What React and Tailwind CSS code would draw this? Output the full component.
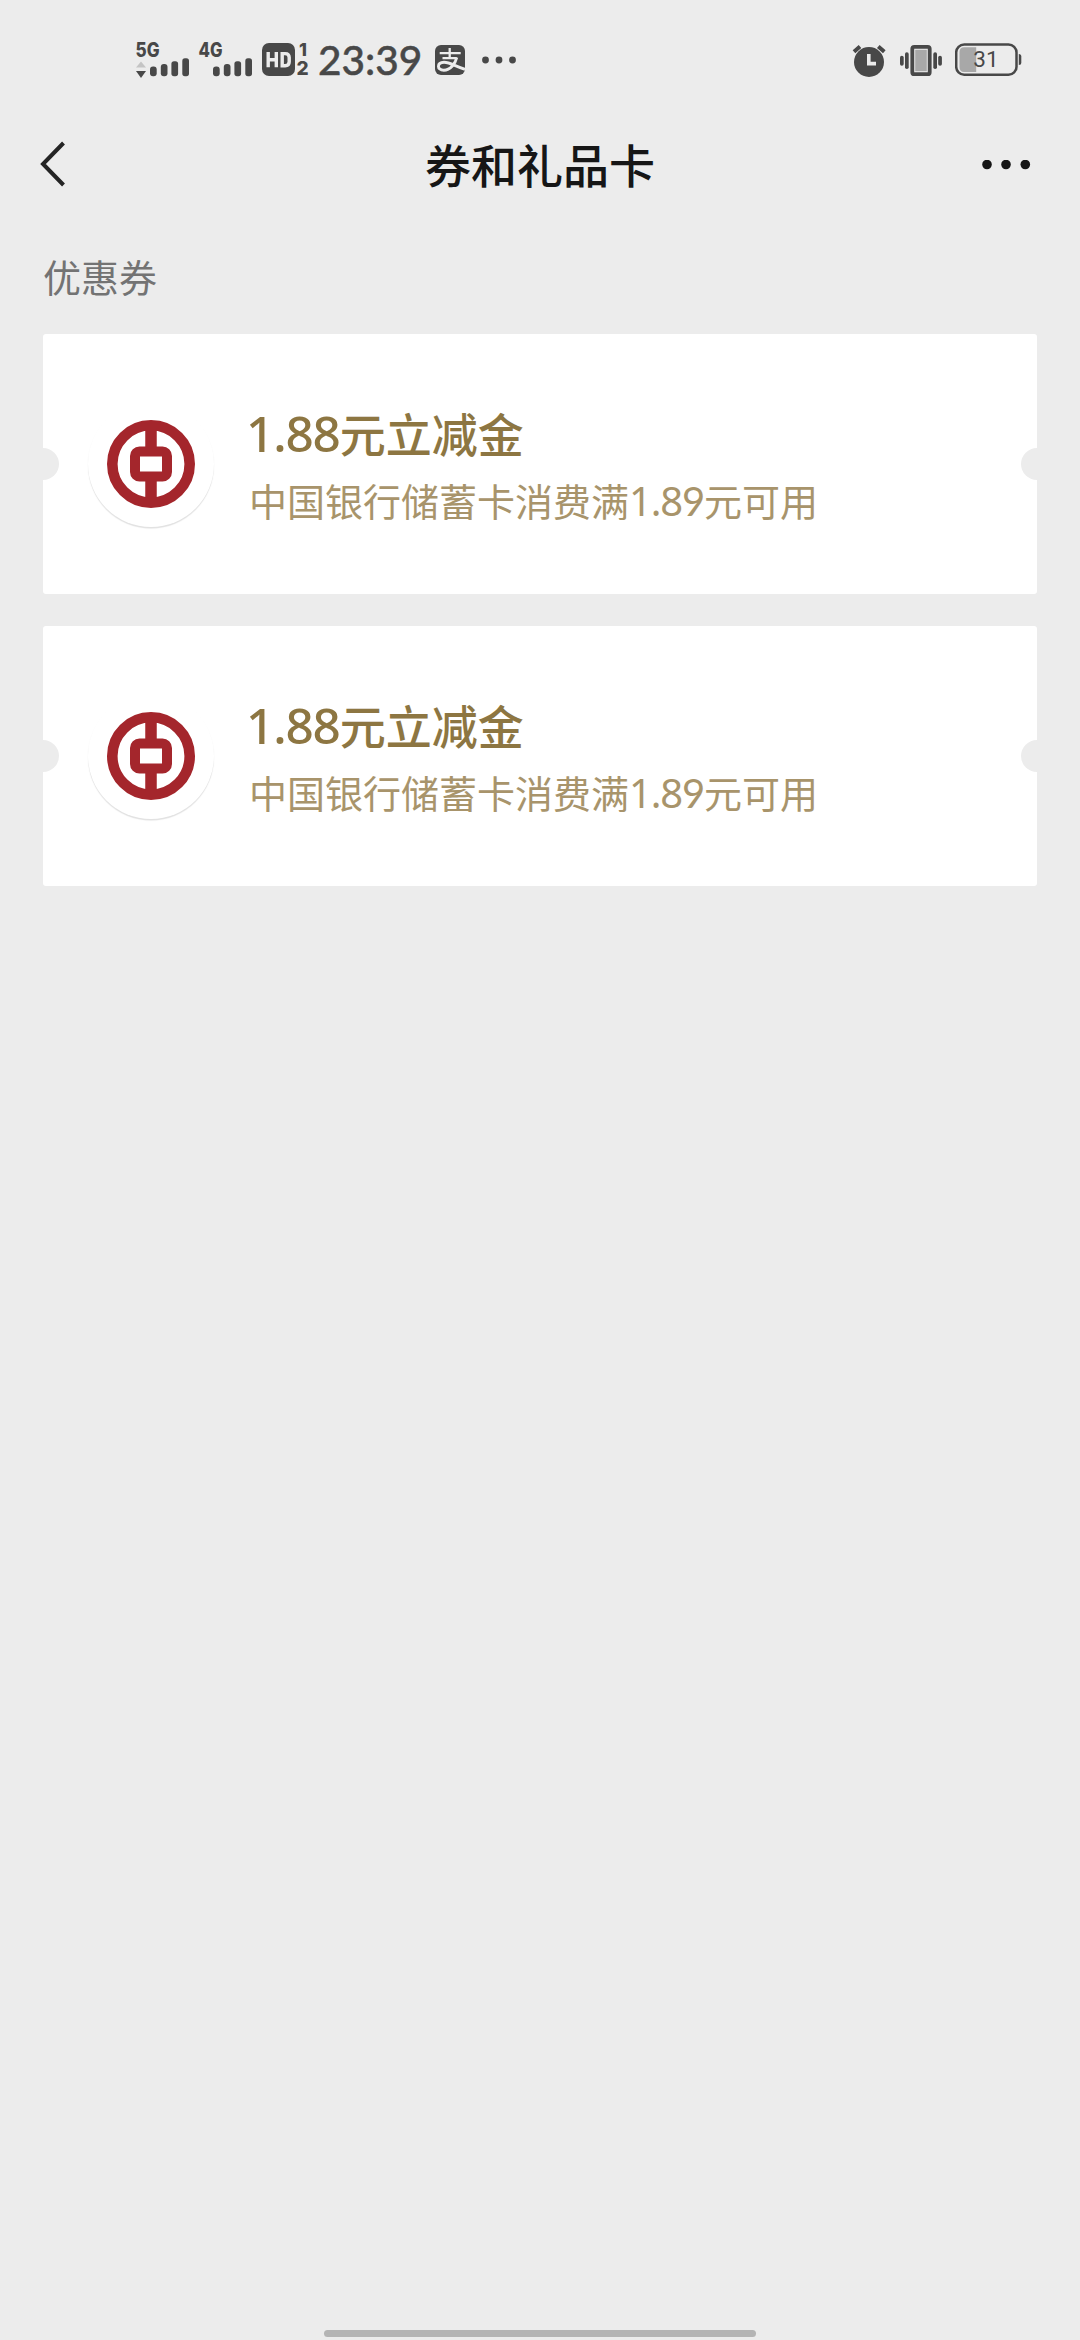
const coupons = [
  { id: 1, amount: '1.88', unit: '元立减金', prefix: '中国银行储蓄卡消费满', limit: '1.89', suffix: '元可用' },
  { id: 2, amount: '1.88', unit: '元立减金', prefix: '中国银行储蓄卡消费满', limit: '1.89', suffix: '元可用' },
]

// 9 has a straight tail in Lato, the other digits stay in Noto Sans
function Digits({ value, className }) {
  return (
    <span className={`font-['Noto_Sans'] ${className}`}>
      {value.split('').map((c, i) => (
        <span key={i} className={c === '9' ? "font-['Lato']" : ''}>{c}</span>
      ))}
    </span>
  )
}

function Signal({ label, arrows, bars }) {
  return (
    <svg className="-mt-2" width="58" height="48" viewBox="0 -8 58 48" fill="#484848">
      <text x="0.5" y="16.5" fontSize="19.5" fontWeight="800" fontFamily="Inter" textLength="24" lengthAdjust="spacingAndGlyphs">{label}</text>
      {arrows && (
        <>
          <path d="M6 21.5l5 6h-10z" fill="#c4c4c4" />
          <path d="M1 31h10l-5 7z" />
        </>
      )}
      <rect x={bars} y="26.5" width="6.7" height="9.7" rx="3" />
      <rect x={bars + 10.8} y="24" width="6.7" height="12.2" rx="3" />
      <rect x={bars + 21.4} y="21.2" width="6.7" height="15" rx="2.6" />
      <rect x={bars + 32.3} y="18.3" width="6.7" height="17.9" rx="2.6" />
    </svg>
  )
}

function AlipayIcon() {
  return (
    <svg className="mt-[5px]" width="30" height="30" viewBox="0 0 30 30" fill="none" stroke="#ececec">
      <rect width="30" height="30" rx="6" fill="#484848" stroke="none" />
      <path d="M4.700 8.200h21M14.700 3v10.300M7.500 13.200h14.300" strokeWidth="2.300" />
      <path d="M21.800 12.500C20.500 18 15.500 25.200 8.800 25.200C1.500 25.200 1.800 17.500 9 17.300C15 17.200 20 21.300 30 24.300" strokeWidth="2.900" />
    </svg>
  )
}

function StatusBar() {
  return (
    <div className="flex h-[120px] items-start pt-10 pl-[135px] pr-[57px]">
      <Signal label="5G" arrows bars={15} />
      <div className="ml-[5px]">
        <Signal label="4G" bars={15} />
      </div>
      <svg className="ml-[6px]" width="48" height="40" viewBox="0 0 48 40" fill="#484848" fontFamily="Inter" fontWeight="800">
        <rect x="0" y="3" width="33" height="33" rx="7" />
        <path d="M6.200 12v15.300M14.300 12v15.300M6.200 19.700h8.100M20.200 13.600v12.100h3q4 0 4-4v-4.100q0-4-4-4z" fill="none" stroke="#ececec" strokeWidth="3.400" />
        <text x="37" y="16" fontSize="18">1</text>
        <text x="34.500" y="35.300" fontSize="19">2</text>
      </svg>
      <div className="ml-[8px] w-[117px] font-['Lato'] text-[40.5px]/[39px] font-medium whitespace-nowrap text-[#484848] [-webkit-text-stroke:0.5px_#484848]">23:39</div>
      <AlipayIcon />
      <svg className="ml-[16px]" width="36" height="40" viewBox="0 0 36 40" fill="#484848">
        <circle cx="4.500" cy="20" r="3.400" />
        <circle cx="18" cy="20" r="3.400" />
        <circle cx="31.500" cy="20" r="3.400" />
      </svg>

      <svg className="ml-auto" width="34" height="40" viewBox="0 0 34 40">
        <circle cx="17" cy="22" r="15" fill="#484848" />
        <path d="M2 11.700l6-5.200M26.300 6.500l6 5.200" stroke="#484848" strokeWidth="4" />
        <path d="M16.800 14v9.600h7.200" fill="none" stroke="#ececec" strokeWidth="3.600" />
      </svg>
      <svg className="ml-[14px]" width="42" height="40" viewBox="0 0 42 40" fill="#484848">
        <rect x="12.300" y="6.800" width="17.400" height="27.400" rx="2" fill="none" stroke="#484848" strokeWidth="3.800" />
        <rect x="15.200" y="9.800" width="11.600" height="21.400" fill="#a8a8a8" />
        <rect x="0" y="15.800" width="3.700" height="10" rx="1.800" />
        <rect x="5" y="12.300" width="3.700" height="16.700" rx="1.800" />
        <rect x="33.300" y="12.300" width="3.700" height="16.700" rx="1.800" />
        <rect x="38.200" y="15.800" width="3.700" height="10" rx="1.800" />
      </svg>
      <svg className="ml-[13px]" width="68" height="40" viewBox="0 0 68 40">
        <path d="M4.500 12q0-4.700 4.700-4.700h12v24.700h-12q-4.700 0-4.700-4.700z" fill="#a8a8a8" />
        <rect x="1.200" y="4.500" width="60.300" height="30.300" rx="8" fill="none" stroke="#484848" strokeWidth="2.500" />
        <path d="M63.800 14q2.500 0 2.500 2.500v6q0 2.500-2.500 2.500z" fill="#484848" />
        <text x="31" y="27" textAnchor="middle" fontSize="22.500" fontFamily="Roboto" fill="#484848">31</text>
      </svg>
    </div>
  )
}

function NavBar() {
  return (
    <div className="grid h-[90px] grid-cols-[1fr_auto_1fr] items-center px-[39px]">
      <svg width="28" height="48" viewBox="0 0 28 48" fill="none" stroke="#242424" strokeWidth="4">
        <path d="M24.500 2L4 23L24.500 44" />
      </svg>
      <h1 className="-mt-[4px] text-[46px]/[60px] font-medium text-[#161616]">券和礼品卡</h1>
      <svg className="mr-[10px] justify-self-end" width="50" height="10" viewBox="0 0 50 10" fill="#161616">
        <circle cx="6" cy="4.500" r="4.800" />
        <circle cx="25" cy="4.500" r="4.800" />
        <circle cx="44.300" cy="4.500" r="4.800" />
      </svg>
    </div>
  )
}

function BankLogo() {
  return (
    <div className="flex size-[126px] shrink-0 items-center justify-center rounded-full bg-white shadow-[0_1.5px_1px_rgba(0,0,0,0.12)]">
      <svg width="88" height="88" viewBox="0 0 88 88" fill="none" stroke="#a4262c">
        <circle cx="44" cy="44" r="38.700" strokeWidth="10.600" />
        <rect x="28" y="31.500" width="32" height="25" rx="4.500" strokeWidth="10" />
        <path d="M44 8v20M44 60v20" strokeWidth="11.500" />
      </svg>
    </div>
  )
}

function CouponCard({ coupon }) {
  return (
    <div className="relative flex h-[260px] items-center overflow-hidden rounded-[3px] bg-white pl-[45px]">
      <span className="absolute top-[114px] -left-4 size-8 rounded-full bg-[#ececec]" />
      <span className="absolute top-[114px] -right-4 size-8 rounded-full bg-[#ececec]" />
      <BankLogo />
      <div className="ml-[32px] whitespace-nowrap">
        <p className="h-[68px] text-[46px]/[64px] font-medium text-[#8d7642]">
          <Digits value={coupon.amount} className="text-[49.5px] tracking-[-1.2px]" />
          {coupon.unit}
        </p>
        <p className="h-[60px] pl-[3px] text-[38px]/[64px] text-[#a8946b]">
          {coupon.prefix}
          <Digits value={coupon.limit} className="text-[40px] tracking-[-1.2px]" />
          {coupon.suffix}
        </p>
      </div>
    </div>
  )
}

export default function App() {
  return (
    <div className="flex h-[2340px] w-[1080px] flex-col bg-[#ececec] font-['Noto_Sans_CJK_SC',sans-serif]">
      <StatusBar />
      <NavBar />
      <main className="flex-1 px-[43px]">
        <h2 className="pt-[36px] text-[38px]/[60px] text-[#737373]">优惠券</h2>
        <div className="mt-[28px] flex flex-col gap-8">
          {coupons.map(c => (
            <CouponCard key={c.id} coupon={c} />
          ))}
        </div>
      </main>
      <div className="mx-auto mb-[3px] h-[7px] w-[432px] rounded-full bg-[#b4b4b4]" />
    </div>
  )
}
